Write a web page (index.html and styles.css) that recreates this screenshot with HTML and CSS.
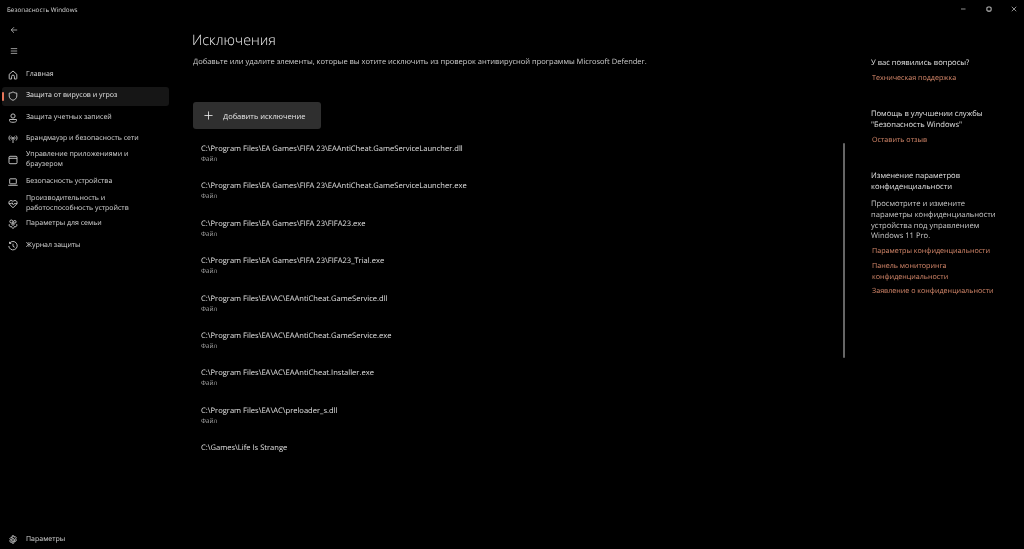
FILE: index.html
```html
<!DOCTYPE html>
<html lang="ru">
<head>
<meta charset="utf-8">
<title>Безопасность Windows</title>
<link rel="stylesheet" href="styles.css">
</head>
<body>
<div class="app">
  <header class="titlebar">
    <span class="app-title">Безопасность Windows</span>
    <div class="win-controls">
      <svg class="win-icon" viewBox="0 0 8 8"><path d="M0 4h6"/></svg>
      <svg class="win-icon" viewBox="0 0 8 8"><rect x="1.2" y="1.2" width="5.6" height="5.6" rx="1.6" stroke-width="1.4"/></svg>
      <svg class="win-icon" viewBox="0 0 8 8"><path d="M1 1l6 6M7 1l-6 6"/></svg>
    </div>
  </header>
  <div class="body">
    <nav class="sidebar">
      <div class="tool back"><svg class="ico" viewBox="0 0 10 10"><path d="M9 5H1.5M5 1.5L1.5 5 5 8.500"/></svg></div>
      <div class="tool burger"><svg class="ico" viewBox="0 0 10 10"><path d="M1 2h8M1 5h8M1 8h8"/></svg></div>
      <ul class="nav">
        <li class="nav-item"><svg class="ico" viewBox="0 0 10 10"><path d="M1.200 4.300L5 1l3.800 3.300V8.500a.5.5 0 0 1-.5.5H6.400V6.500a1.400 1.400 0 0 0-2.800 0V9H1.700a.5.5 0 0 1-.5-.5z"/></svg><span>Главная</span></li>
        <li class="nav-item active"><svg class="ico" viewBox="0 0 10 10"><path d="M5 .8c1.200 1 2.500 1.300 3.800 1.300V5c0 2.200-1.600 3.500-3.800 4.300C2.800 8.500 1.200 7.200 1.200 5V2.100C2.500 2.100 3.800 1.800 5 .8z"/></svg><span>Защита от вирусов и угроз</span></li>
        <li class="nav-item"><svg class="ico" viewBox="0 0 10 10"><circle cx="5" cy="3" r="2.100"/><path d="M1.500 6.500h7V7.500C8.500 8.800 7 9.300 5 9.300S1.500 8.800 1.500 7.500z"/></svg><span>Защита учетных записей</span></li>
        <li class="nav-item"><svg class="ico" viewBox="0 0 10 10"><circle cx="5" cy="4" r=".7"/><path d="M5 4.500V9M3.500 2.500C2.800 3.300 2.800 4.700 3.500 5.500M6.500 2.500C7.200 3.300 7.200 4.700 6.500 5.500M2 1.500C.6 3 .6 5 2 6.500M8 1.500C9.400 3 9.400 5 8 6.500"/></svg><span>Брандмауэр и безопасность сети</span></li>
        <li class="nav-item tall"><svg class="ico" viewBox="0 0 10 10"><rect x="1" y="1.300" width="8" height="7.400" rx="1"/><path d="M1 3.300h8"/></svg><span>Управление приложениями и браузером</span></li>
        <li class="nav-item"><svg class="ico" viewBox="0 0 10 10"><rect x="1.700" y="1.800" width="6.600" height="5" rx=".5"/><path d="M.3 8.300h9.400"/></svg><span>Безопасность устройства</span></li>
        <li class="nav-item tall"><svg class="ico" viewBox="0 0 10 10"><path d="M5 8.800L1.500 5.300C.2 3.800 1 1.500 3 1.500c.9 0 1.500.4 2 1 .5-.6 1.100-1 2-1 2 0 2.800 2.300 1.500 3.800z"/><path d="M.8 4.700h2.400l.8-1 1.200 2 .9-1h3.100"/></svg><span>Производительность и работоспособность устройств</span></li>
        <li class="nav-item"><svg class="ico" viewBox="0 0 10 10"><circle cx="3.300" cy="2.500" r="1.500"/><circle cx="6.800" cy="2.800" r="1.300"/><circle cx="5" cy="5.200" r="1.100"/><path d="M1.300 5.200C.8 6.800 1.500 7.800 3 7.800M8.700 5.200c.5 1.600-.2 2.600-1.700 2.600M3.500 7.200c0 1.300.7 2 1.500 2s1.500-.7 1.500-2"/></svg><span>Параметры для семьи</span></li>
        <li class="nav-item"><svg class="ico" viewBox="0 0 10 10"><path d="M1.600 2.200A4.200 4.200 0 1 1 .8 5M1.500.8v1.700h1.700M5 2.700V5.300l1.700 1"/></svg><span>Журнал защиты</span></li>
      </ul>
      <div class="nav-item settings"><svg class="ico" viewBox="0 0 10 10"><circle cx="5" cy="5" r="1.400"/><path d="M4.200.8h1.600l.3 1.300 1.200-.5 1 1.200-.8 1.100.9 1.100-.8 1.400-1.300-.4-.3 1.300-.2.9H4.200l-.3-1.300-1.300.4-.9-1.400.9-1.100-.8-1.100 1-1.200 1.200.5z"/></svg><span>Параметры</span></div>
    </nav>
    <main class="content">
      <h1 class="title">Исключения</h1>
      <p class="subtitle">Добавьте или удалите элементы, которые вы хотите исключить из проверок антивирусной программы Microsoft Defender.</p>
      <button class="add-btn"><svg class="plus" viewBox="0 0 10 10"><path d="M5 .5v9M.5 5h9"/></svg><span>Добавить исключение</span></button>
      <ul class="list">
        <li class="row"><div class="path">C:\Program Files\EA Games\FIFA 23\EAAntiCheat.GameServiceLauncher.dll</div><div class="kind">Файл</div></li>
        <li class="row"><div class="path">C:\Program Files\EA Games\FIFA 23\EAAntiCheat.GameServiceLauncher.exe</div><div class="kind">Файл</div></li>
        <li class="row"><div class="path">C:\Program Files\EA Games\FIFA 23\FIFA23.exe</div><div class="kind">Файл</div></li>
        <li class="row"><div class="path">C:\Program Files\EA Games\FIFA 23\FIFA23_Trial.exe</div><div class="kind">Файл</div></li>
        <li class="row"><div class="path">C:\Program Files\EA\AC\EAAntiCheat.GameService.dll</div><div class="kind">Файл</div></li>
        <li class="row"><div class="path">C:\Program Files\EA\AC\EAAntiCheat.GameService.exe</div><div class="kind">Файл</div></li>
        <li class="row"><div class="path">C:\Program Files\EA\AC\EAAntiCheat.Installer.exe</div><div class="kind">Файл</div></li>
        <li class="row"><div class="path">C:\Program Files\EA\AC\preloader_s.dll</div><div class="kind">Файл</div></li>
        <li class="row"><div class="path">C:\Games\Life Is Strange</div></li>
      </ul>
      <div class="scrollbar"></div>
    </main>
    <aside class="aside">
      <section class="block first">
        <h2 class="head">У вас появились вопросы?</h2>
        <a class="link">Техническая поддержка</a>
      </section>
      <section class="block second">
        <h2 class="head">Помощь в улучшении службы "Безопасность Windows"</h2>
        <a class="link">Оставить отзыв</a>
      </section>
      <section class="block third">
        <h2 class="head">Изменение параметров конфиденциальности</h2>
        <p class="desc">Просмотрите и измените параметры конфиденциальности устройства под управлением Windows 11 Pro.</p>
        <a class="link">Параметры конфиденциальности</a>
        <a class="link">Панель мониторинга конфиденциальности</a>
        <a class="link">Заявление о конфиденциальности</a>
      </section>
    </aside>
  </div>
</div>
</body>
</html>
```
FILE: styles.css
```css
* { box-sizing: border-box; }
html, body { margin: 0; height: 100%; background: #000; }
body { font-family: "Open Sans", "Noto Sans", sans-serif; color: #e6e6e6; font-size: 8px; overflow: hidden; text-rendering: geometricPrecision; }
ul { list-style: none; margin: 0; padding: 0; }
h1, h2, p { margin: 0; font-weight: 400; }

.app { width: 1024px; height: 549px; display: flex; flex-direction: column; background: #000; filter: blur(.25px); }

.titlebar { height: 18px; flex: none; display: flex; align-items: center; justify-content: space-between; padding: 0 7px 0 7px; }
.app-title { font-size: 6.300px; color: #d8d8d8; }
.win-controls { display: flex; gap: 19px; align-items: center; }
.win-icon { width: 6px; height: 6px; fill: none; stroke: #bdbdbd; stroke-width: 1; }

.body { flex: 1; display: flex; min-height: 0; }

.sidebar { width: 175px; flex: none; display: flex; flex-direction: column; padding: 0 6px 0 2px; }
.ico { width: 10px; height: 10px; fill: none; stroke: #d0d0d0; stroke-width: .9; flex: none; }
.tool { height: 21px; display: flex; align-items: center; padding-left: 8px; padding-top: 3px; }
.tool .ico { width: 8px; height: 8px; }
.nav { display: flex; flex-direction: column; margin-top: 4px; }
.nav-item { position: relative; min-height: 21.500px; display: flex; align-items: center; gap: 8px; padding: 0 4px 0 6px; font-size: 7px; line-height: 9.800px; color: #d8d8d8; }
.nav-item.tall { min-height: 21px; padding-bottom: 1px; }
.nav-item.tall + .nav-item + .nav-item.tall { padding-bottom: 0; padding-top: 1px; }
.nav-item.active { min-height: 18.500px; margin: 1.500px 0; background: #161616; border-radius: 3px; color: #e8e8e8; }
.nav-item.active::before { content: ""; position: absolute; left: 0; top: 5px; bottom: 5px; width: 2px; border-radius: 1px; background: #e9765a; }
.settings { margin-top: auto; padding-top: 3px; }

.content { position: relative; flex: 1; padding: 13px 0 0 18px; min-width: 0; }
.title { margin-left: -1px; font-size: 14.300px; line-height: 20px; color: #f0f0f0; font-weight: 300; }
.subtitle { margin-top: 6px; font-size: 7.520px; line-height: 11px; color: #cfcfcf; white-space: nowrap; }
.add-btn { margin-top: 34px; width: 128px; height: 27px; display: flex; align-items: center; gap: 10px; padding: 0 0 0 11px; border: 0; border-radius: 3px; background: #2f2f2f; color: #e6e6e6; font: inherit; font-size: 7.500px; }
.plus { width: 9px; height: 9px; fill: none; stroke: #f0f0f0; stroke-width: .9; }
.list { margin-top: 15px; padding-left: 8px; }
.row { height: 37.400px; }
.path { font-size: 7.570px; line-height: 11px; color: #e0e0e0; white-space: nowrap; }
.kind { font-size: 6.300px; line-height: 8px; color: #a8a8a8; }
.scrollbar { position: absolute; left: 668px; top: 125px; width: 2px; height: 215px; background: #666; border-radius: 1px; }

.aside { width: 153px; flex: none; padding: 40px 8px 0 0; }
.block { display: flex; flex-direction: column; }
.second { margin-top: 25px; }
.third { margin-top: 26px; }
.head { font-size: 7.600px; line-height: 11px; color: #e0e0e0; }
.desc { margin-top: 6px; max-width: 128px; font-size: 7.600px; line-height: 10.700px; color: #c8c8c8; }
.link { display: block; margin-top: 4.200px; padding-left: 1px; font-size: 7.150px; line-height: 10.500px; color: #d98a6c; }
```
